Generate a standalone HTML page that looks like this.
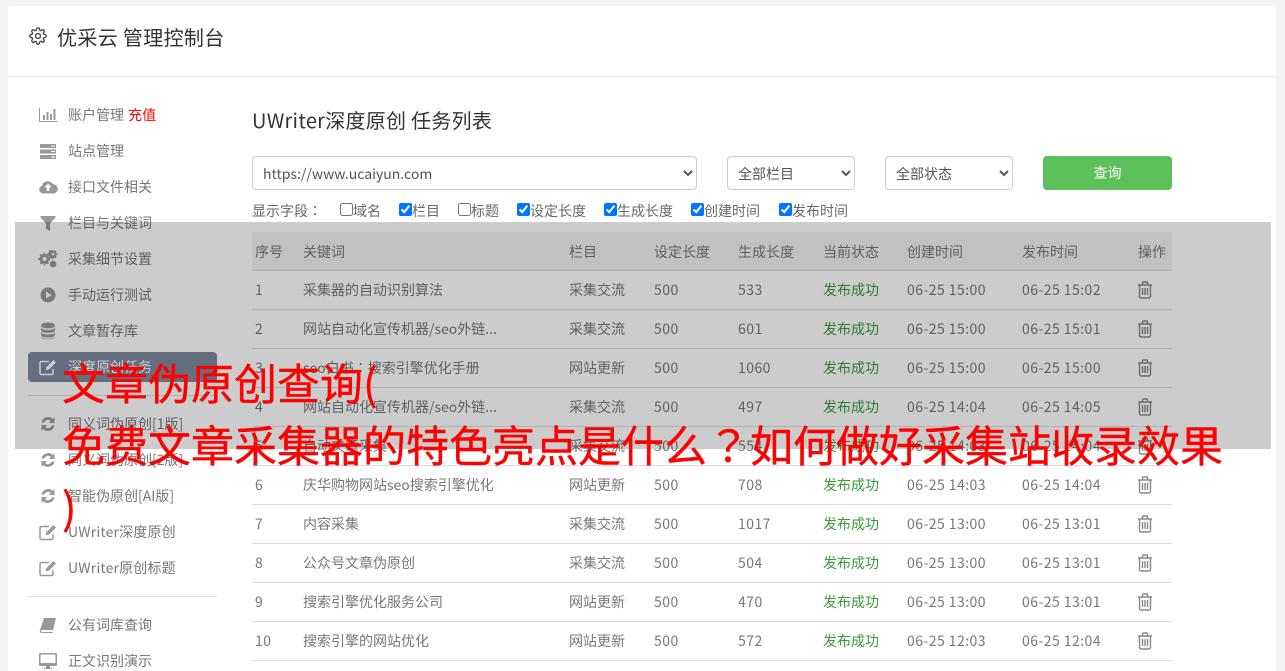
<!DOCTYPE html>
<html lang="zh-CN"><head><meta charset="utf-8"><title>优采云 管理控制台</title>
<style>
*{box-sizing:border-box}
html,body{margin:0;padding:0;width:1285px;height:671px;overflow:hidden;background:#f3f3f4}
body{position:relative;font-family:"Noto Sans CJK SC","Liberation Sans",sans-serif;font-size:14px;color:#676a6c}
.panel{position:absolute;left:8px;top:6px;width:1268px;height:680px;background:#fff;border-radius:3px}
.hr{position:absolute;left:8px;top:76px;width:1268px;height:1px;background:#e7eaec}
.abs{position:absolute;white-space:nowrap;line-height:20px}
.nav{position:absolute;left:68px;line-height:20px;color:#777;white-space:nowrap}
.ic{position:absolute;left:38px;width:20px;height:20px;fill:#999}
.active{position:absolute;left:28px;top:352px;width:189px;height:30px;background:#7f8a9e;border-radius:4px}
.div{position:absolute;left:28px;width:189px;height:1px;background:#ddd}
select{position:absolute;top:156px;height:34px;background:#fff;border:1px solid #ccc;border-radius:4px;font:14px "Noto Sans CJK SC","Liberation Sans",sans-serif;color:#555;padding:1px 6px 0}
.btn{position:absolute;left:1043px;top:156px;width:129px;height:34px;background:#5cc05c;border-radius:4px;color:#fff;text-align:center;line-height:35px}
input{position:absolute;top:203px;margin:0;width:13px;height:13px}
table{position:absolute;left:252px;top:232px;width:920px;table-layout:fixed;border-collapse:separate;border-spacing:0}
th,td{height:39px;padding:0 0 0 3px;border-bottom:1px solid #ddd;font-weight:400;text-align:left;white-space:nowrap;overflow:hidden;color:#777;line-height:20px}
th{background:#f2f2f2;padding-top:1px}
td.s{color:#3a9a3a}
td.n{letter-spacing:.45px}
td svg{display:block;width:16px;height:18px;fill:none;stroke:#888;stroke-width:1.4;margin-left:-1px;margin-top:-1px}
.ov{position:absolute;left:15px;top:222px;width:1256px;height:227px;background:rgba(0,0,0,.2);z-index:5}
.t{position:absolute;left:62px;top:351px;font-size:43px;line-height:62px;color:#f00;z-index:6;white-space:nowrap;-webkit-text-stroke:.4px #f00}
.c{font-family:"Noto Sans CJK TC","Liberation Sans",sans-serif}
</style></head><body>
<svg width="0" height="0" style="position:absolute"><defs>
<symbol id="tr" viewBox="0 0 16 18"><path d="M1 4h14M5.500 4V2a1 1 0 0 1 1-1h3a1 1 0 0 1 1 1v2M2.500 4v11.500A1.500 1.500 0 0 0 4 17h8a1.500 1.500 0 0 0 1.500-1.500V4M5.500 7v7M8 7v7M10.500 7v7"/></symbol>
<symbol id="re" viewBox="0 0 20 20"><path d="M3.500 8.500a6.800 6.800 0 0 1 11.300-3.600L16.500 3.300V9h-5.700l2.100-2.100a4.200 4.200 0 0 0-6.700 1.600zM16.500 11.500a6.800 6.800 0 0 1-11.300 3.600l-1.700 1.600V11h5.700l-2.100 2.100a4.200 4.200 0 0 0 6.700-1.600z"/></symbol>
</defs></svg>
<div class="panel"></div><div class="hr"></div>

<svg class="abs" style="left:29px;top:27px" width="18" height="18" viewBox="0 0 24 24" fill="none" stroke="#444" stroke-width="1.800"><circle cx="12" cy="12" r="3.300"/><path d="M19.4 15a1.65 1.65 0 0 0 .33 1.82l.06.06a2 2 0 0 1 0 2.83 2 2 0 0 1-2.83 0l-.06-.06a1.65 1.65 0 0 0-1.82-.33 1.65 1.65 0 0 0-1 1.51V21a2 2 0 0 1-2 2 2 2 0 0 1-2-2v-.09A1.65 1.65 0 0 0 9 19.4a1.65 1.65 0 0 0-1.82.33l-.06.06a2 2 0 0 1-2.83 0 2 2 0 0 1 0-2.83l.06-.06a1.65 1.65 0 0 0 .33-1.82 1.65 1.65 0 0 0-1.51-1H3a2 2 0 0 1-2-2 2 2 0 0 1 2-2h.09A1.65 1.65 0 0 0 4.600 9a1.65 1.65 0 0 0-.33-1.82l-.06-.06a2 2 0 0 1 0-2.83 2 2 0 0 1 2.83 0l.06.06a1.65 1.65 0 0 0 1.82.33H9a1.65 1.65 0 0 0 1-1.51V3a2 2 0 0 1 2-2 2 2 0 0 1 2 2v.09a1.65 1.65 0 0 0 1 1.51 1.65 1.65 0 0 0 1.82-.33l.06-.06a2 2 0 0 1 2.83 0 2 2 0 0 1 0 2.83l-.06.06a1.65 1.65 0 0 0-.33 1.82V9a1.65 1.65 0 0 0 1.51 1H21a2 2 0 0 1 2 2 2 2 0 0 1-2 2h-.09a1.65 1.65 0 0 0-1.51 1z"/></svg>
<div class="abs" style="left:57px;top:22px;font-size:20px;line-height:30px;color:#333;letter-spacing:.35px">优采云 管理控制台</div>

<svg class="ic" style="top:105px" viewBox="0 0 20 20"><path d="M1 3h1v13h17v1H1z"/><path d="M5 10h2v5H5zM8.500 7h2v8h-2zM12 9h2v6h-2zM15.500 4h2v11h-2z"/></svg>
<div class="nav" style="top:105px">账户管理 <span style="color:#f00;margin-left:1px">充值</span></div>
<svg class="ic" style="top:141px" viewBox="0 0 20 20"><path d="M2 3h16v4H2zM2 8.500h16v4H2zM2 14h16v4H2z"/><path fill="#fff" d="M13 4.500h4v1h-4zM13 10h4v1h-4zM13 15.500h4v1h-4z"/></svg>
<div class="nav" style="top:141px">站点管理</div>
<svg class="ic" style="top:177px" viewBox="0 0 20 20"><path d="M5 16.500a4 4 0 0 1-1-7.800 6 6 0 0 1 11-1.500 4.700 4.700 0 0 1 1 9.300z"/><path fill="#fff" d="M10 6.500l3.500 3.700h-2.200V14H8.700v-3.800H6.500z"/></svg>
<div class="nav" style="top:177px">接口文件相关</div>
<svg class="ic" style="top:213px" viewBox="0 0 20 20"><path d="M2.500 3h15v1.500L12 10.500V18l-4-2.500v-5L2.500 4.500z"/></svg>
<div class="nav" style="top:213px">栏目与关键词</div>
<svg class="ic" style="top:249px" viewBox="0 0 20 20"><path fill-rule="evenodd" d="M7 5l1.300.5 1.200-.8 1.500 1.500-.8 1.200.5 1.300 1.500.3v2.100l-1.500.3-.5 1.300.8 1.200-1.500 1.500-1.200-.8-1.300.5-.3 1.500H5.900l-.3-1.500-1.300-.5-1.200.8-1.500-1.500.8-1.200-.5-1.300L.4 11.100V9l1.500-.3.500-1.300-.8-1.200L3.100 4.700l1.200.8L5.600 5l.3-1.500h.8zM6.500 8a2 2 0 1 0 0 4 2 2 0 0 0 0-4z"/><path fill-rule="evenodd" d="M15.500 1.500l1 .3.900-.4 1 1-.4.900.3 1 1 .3v1.400l-1 .3-.3 1 .4.900-1 1-.9-.4-1 .3-.3 1h-1.400l-.3-1-1-.3-.9.400-1-1 .4-.9-.3-1-1-.3V4l1-.3.300-1-.4-.9 1-1 .9.400 1-.3zM15 3.800a1.200 1.200 0 1 0 0 2.500 1.200 1.200 0 0 0 0-2.500z"/><circle cx="15" cy="15" r="3.300"/></svg>
<div class="nav" style="top:249px">采集细节设置</div>
<svg class="ic" style="top:285px" viewBox="0 0 20 20"><path fill-rule="evenodd" d="M10 2.500a7.500 7.500 0 1 1 0 15 7.500 7.500 0 0 1 0-15zM8 6.500v7l5.500-3.500z"/></svg>
<div class="nav" style="top:285px">手动运行测试</div>
<svg class="ic" style="top:321px" viewBox="0 0 20 20"><ellipse cx="10" cy="4.500" rx="7" ry="3"/><path d="M3 6.500c1 3.300 13 3.300 14 0v3c-1 3.300-13 3.300-14 0zM3 11c1 3.300 13 3.300 14 0v3c-1 3.300-13 3.300-14 0zM3 15.200c1 3.300 13 3.300 14 0v.5c-.5 3.400-13.500 3.400-14 0z"/></svg>
<div class="nav" style="top:321px">文章暂存库</div>

<div class="active"></div>
<svg class="ic" style="top:357px;fill:none;stroke:#fff;stroke-width:1.500" viewBox="0 0 20 20"><path d="M15 12v4a1.500 1.500 0 0 1-1.500 1.500h-10A1.500 1.500 0 0 1 2 16V6a1.500 1.500 0 0 1 1.500-1.500H11"/><path fill="#fff" stroke="none" d="M8 10.500L15.500 3l2.500 2.500L10.500 13H8z"/></svg>
<div class="nav" style="top:357px;color:#fff">深度原创任务</div>
<div class="div" style="top:395px"></div>

<svg class="ic" style="top:414px"><use href="#re"/></svg>
<div class="nav" style="top:414px">同义词伪原创[1版]</div>
<svg class="ic" style="top:450px"><use href="#re"/></svg>
<div class="nav" style="top:450px">同义词伪原创[2版]</div>
<svg class="ic" style="top:486px"><use href="#re"/></svg>
<div class="nav" style="top:486px">智能伪原创[AI版]</div>
<svg class="ic" style="top:522px;fill:none;stroke:#999;stroke-width:1.500" viewBox="0 0 20 20"><path d="M15 12v4a1.500 1.500 0 0 1-1.500 1.500h-10A1.500 1.500 0 0 1 2 16V6a1.500 1.500 0 0 1 1.500-1.500H11"/><path fill="#999" stroke="none" d="M8 10.500L15.500 3l2.500 2.500L10.500 13H8z"/></svg>
<div class="nav" style="top:522px;letter-spacing:.17px">UWriter深度原创</div>
<svg class="ic" style="top:558px;fill:none;stroke:#999;stroke-width:1.500" viewBox="0 0 20 20"><path d="M15 12v4a1.500 1.500 0 0 1-1.500 1.500h-10A1.500 1.500 0 0 1 2 16V6a1.500 1.500 0 0 1 1.500-1.500H11"/><path fill="#999" stroke="none" d="M8 10.500L15.500 3l2.500 2.500L10.500 13H8z"/></svg>
<div class="nav" style="top:558px;letter-spacing:.17px">UWriter原创标题</div>
<div class="div" style="top:596px"></div>
<svg class="ic" style="top:615px" viewBox="0 0 20 20"><path d="M6 3h12l-3 12H3.500a1.500 1.500 0 0 0 0 2H15l-.3 1H3.500C2 18 1.500 16.500 2 15z"/></svg>
<div class="nav" style="top:615px">公有词库查询</div>
<svg class="ic" style="top:651px" viewBox="0 0 20 20"><path fill-rule="evenodd" d="M2.500 2h15A1.500 1.500 0 0 1 19 3.500v10a1.500 1.500 0 0 1-1.500 1.500h-15A1.500 1.500 0 0 1 1 13.500v-10A1.500 1.500 0 0 1 2.500 2zM2.500 3.500v8.500h15V3.500zM8 15h4v2h2v1H6v-1h2z"/></svg>
<div class="nav" style="top:651px">正文识别演示</div>

<div class="abs" style="left:252px;top:105px;font-size:20px;line-height:30px;color:#333;letter-spacing:.27px">UWriter深度原创 任务列表</div>
<select style="left:252px;width:445px"><option>https://www.ucaiyun.com</option></select>
<select style="left:727px;width:128px"><option>全部栏目</option></select>
<select style="left:885px;width:128px"><option>全部状态</option></select>
<div class="btn">查询</div>

<div class="abs" style="left:252px;top:201px;color:#666">显示字段<span class="c" lang="zh-TW">：</span></div>
<input type="checkbox" style="left:340px"><div class="abs" style="left:353px;top:201px">域名</div>
<input type="checkbox" checked style="left:399px"><div class="abs" style="left:412px;top:201px">栏目</div>
<input type="checkbox" style="left:458px"><div class="abs" style="left:471px;top:201px">标题</div>
<input type="checkbox" checked style="left:517px"><div class="abs" style="left:530px;top:201px">设定长度</div>
<input type="checkbox" checked style="left:604px"><div class="abs" style="left:617px;top:201px">生成长度</div>
<input type="checkbox" checked style="left:691px"><div class="abs" style="left:704px;top:201px">创建时间</div>
<input type="checkbox" checked style="left:779px"><div class="abs" style="left:792px;top:201px">发布时间</div>

<table>
<colgroup><col style="width:48px"><col style="width:266px"><col style="width:85px"><col style="width:84px"><col style="width:85px"><col style="width:84px"><col style="width:115px"><col style="width:116px"><col style="width:37px"></colgroup>
<tr><th>序号</th><th>关键词</th><th>栏目</th><th>设定长度</th><th>生成长度</th><th>当前状态</th><th>创建时间</th><th>发布时间</th><th>操作</th></tr>
<tr><td class="n">1</td><td>采集器的自动识别算法</td><td>采集交流</td><td class="n">500</td><td class="n">533</td><td class="s">发布成功</td><td class="n">06-25 15:00</td><td class="n">06-25 15:02</td><td><svg><use href="#tr"/></svg></td></tr>
<tr><td class="n">2</td><td>网站自动化宣传机器/seo外链...</td><td>采集交流</td><td class="n">500</td><td class="n">601</td><td class="s">发布成功</td><td class="n">06-25 15:00</td><td class="n">06-25 15:01</td><td><svg><use href="#tr"/></svg></td></tr>
<tr><td class="n">3</td><td>seo白书<span class="c" lang="zh-TW">：</span>搜索引擎优化手册</td><td>网站更新</td><td class="n">500</td><td class="n">1060</td><td class="s">发布成功</td><td class="n">06-25 15:00</td><td class="n">06-25 15:00</td><td><svg><use href="#tr"/></svg></td></tr>
<tr><td class="n">4</td><td>网站自动化宣传机器/seo外链...</td><td>采集交流</td><td class="n">500</td><td class="n">497</td><td class="s">发布成功</td><td class="n">06-25 14:04</td><td class="n">06-25 14:05</td><td><svg><use href="#tr"/></svg></td></tr>
<tr><td class="n">5</td><td>自动文章采集</td><td>采集交流</td><td class="n">500</td><td class="n">554</td><td class="s">发布成功</td><td class="n">06-25 14:03</td><td class="n">06-25 14:04</td><td><svg><use href="#tr"/></svg></td></tr>
<tr><td class="n">6</td><td>庆华购物网站seo搜索引擎优化</td><td>网站更新</td><td class="n">500</td><td class="n">708</td><td class="s">发布成功</td><td class="n">06-25 14:03</td><td class="n">06-25 14:04</td><td><svg><use href="#tr"/></svg></td></tr>
<tr><td class="n">7</td><td>内容采集</td><td>采集交流</td><td class="n">500</td><td class="n">1017</td><td class="s">发布成功</td><td class="n">06-25 13:00</td><td class="n">06-25 13:01</td><td><svg><use href="#tr"/></svg></td></tr>
<tr><td class="n">8</td><td>公众号文章伪原创</td><td>采集交流</td><td class="n">500</td><td class="n">504</td><td class="s">发布成功</td><td class="n">06-25 13:00</td><td class="n">06-25 13:01</td><td><svg><use href="#tr"/></svg></td></tr>
<tr><td class="n">9</td><td>搜索引擎优化服务公司</td><td>网站更新</td><td class="n">500</td><td class="n">470</td><td class="s">发布成功</td><td class="n">06-25 13:00</td><td class="n">06-25 13:01</td><td><svg><use href="#tr"/></svg></td></tr>
<tr><td class="n">10</td><td>搜索引擎的网站优化</td><td>网站更新</td><td class="n">500</td><td class="n">572</td><td class="s">发布成功</td><td class="n">06-25 12:03</td><td class="n">06-25 12:04</td><td><svg><use href="#tr"/></svg></td></tr>
</table>

<div class="ov"></div>
<div class="t">文章伪原创查询(<br>免费文章采集器的特色亮点是什么<span class="c" lang="zh-TW">？</span>如何做好采集站收录效果<br>)</div>
</body></html>
